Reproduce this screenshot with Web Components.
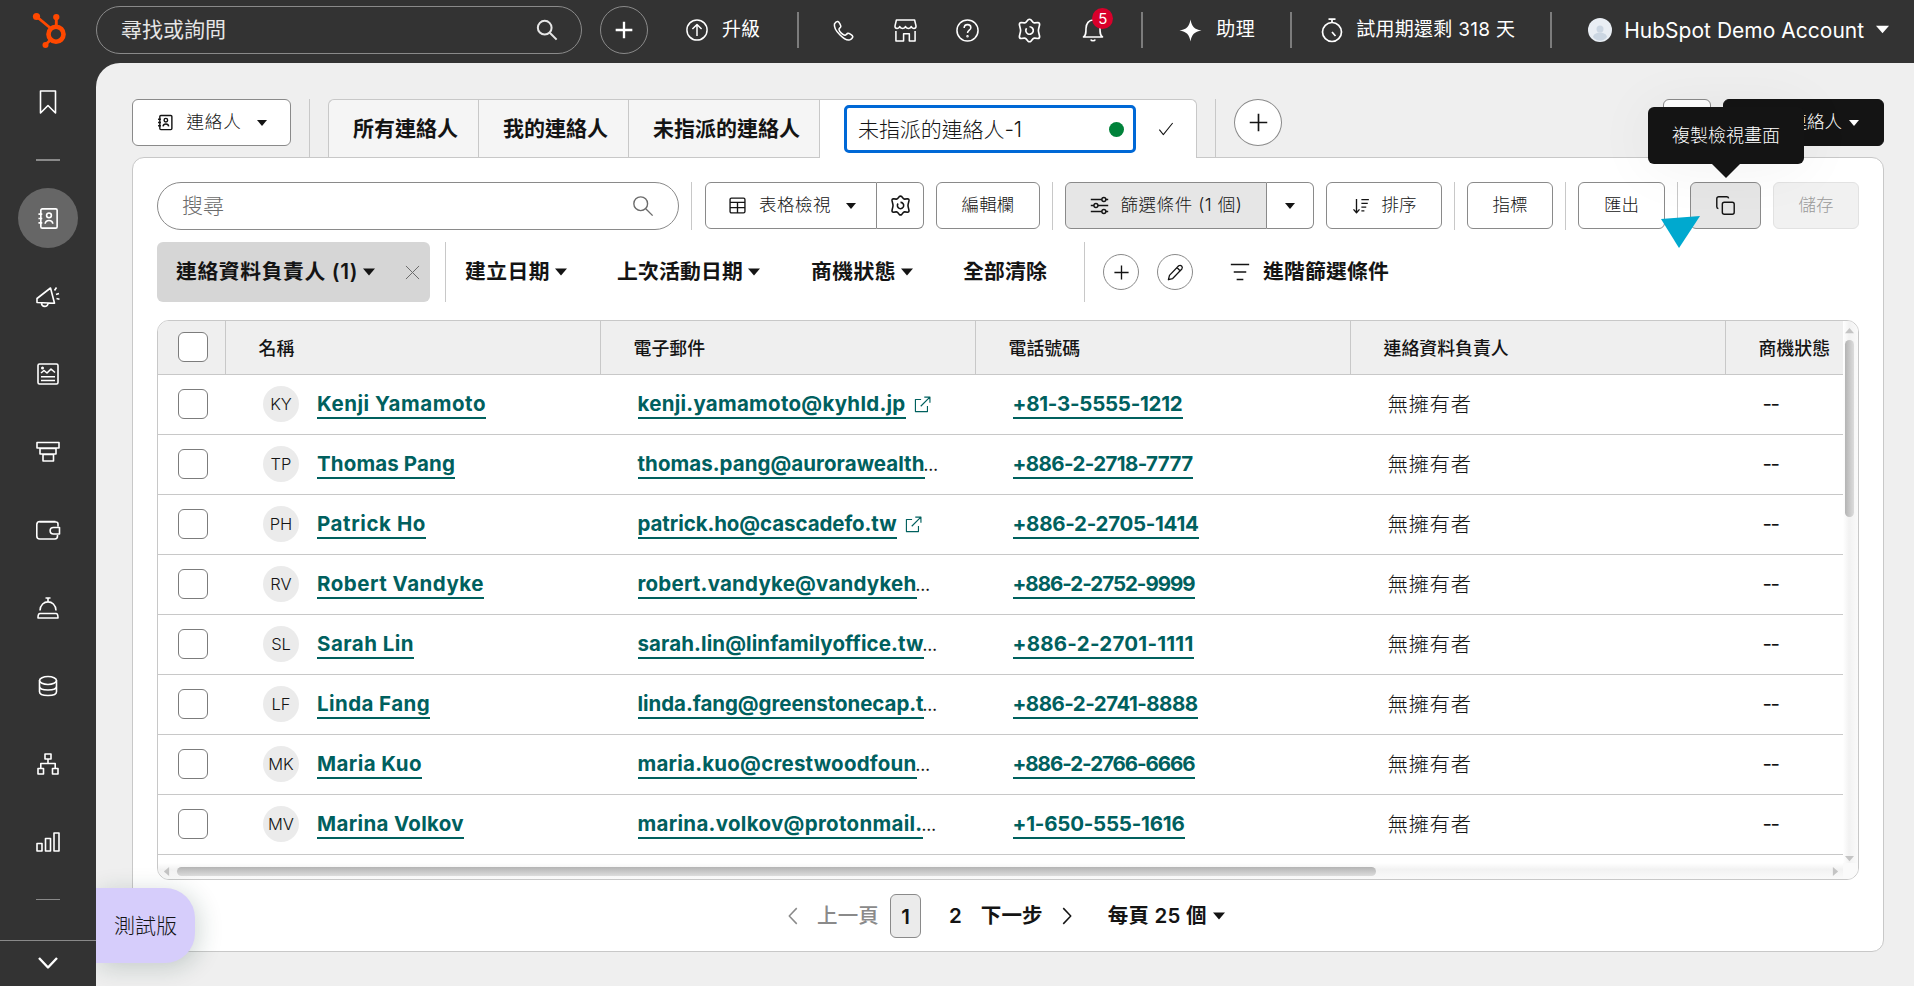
<!DOCTYPE html>
<html lang="zh-Hant">
<head>
<meta charset="utf-8">
<title>連絡人</title>
<style>
    html, body { margin: 0; padding: 0; }
    body {
        width: 1914px;
        height: 986px;
        overflow: hidden;
        font-family: Inter, "Noto Sans CJK TC", sans-serif;
        color: #141414;
    }
</style>
</head>
<body>
<crm-app></crm-app>

<script>
// All icons share a 24x24 box and are stroked with the current colour
const ICONS = {
    search: '<circle cx="9.5" cy="9.5" r="7.5"/><path d="M15 15l7.5 7.5"/>',
    plus: '<path d="M12 2v20M2 12h20"/>',
    upgrade: '<circle cx="12" cy="12" r="11"/><path d="M12 18.5V6M7 11l5-5 5 5"/>',
    phone: '<path d="M2.600 5.200C3.500 3.600 5 2.400 6 2.600c1.500.4 3.400 4.200 3.200 5.300-.2 1.300-2.200 1.800-1.900 3.200.5 2.300 3.800 5.400 6 5.900 1.500.3 2-1.800 3.300-2 1.200-.2 4.900 1.900 5.100 3.300.1 1.100-1.700 3-3.200 3.500C13.500 23.500 1.200 11.500 2.600 5.200z"/>',
    store: '<path d="M2.500 1h19l1.500 6.500c0 1.500-1 2.300-2.300 2.300-1.400 0-2.400-1-2.700-2-.3 1-1.500 2-3 2s-2.700-1-3-2c-.3 1-1.500 2-3 2s-2.700-1-3-2c-.3 1-1.300 2-2.700 2C2 9.800 1 9 1 7.500zM2 12.500V23h8v-7.500h6V23h6V12.500"/>',
    help: '<circle cx="12" cy="12" r="11"/><path d="M8.500 9.500c0-5 7-4.500 7-.5 0 2.700-3.500 2.700-3.500 5.700"/><circle cx="12" cy="18" r=".5"/>',
    gear: '<path d="M10.500 1.900q1.500-1.400 3 0l2 2.300q.6.600 1.500.5l3-.4q1.900.2 1.700 2.200l-1 4.200q-.3 1.300 0 2.600l1 4.200q.2 2-1.700 2.200l-3-.4q-.9-.1-1.500.5l-2 2.300q-1.500 1.400-3 0l-2-2.300q-.6-.6-1.500-.5l-3 .4q-1.900-.2-1.700-2.200l1-4.200q.3-1.300 0-2.600l-1-4.200q-.2-2 1.700-2.200l3 .4q.9.100 1.500-.5z"/><path d="M12 8.400a3.600 3.600 0 1 1-2.800 1.400"/>',
    bell: '<path d="M2.500 19h19c-2.500-1.700-2.500-4-2.500-8.500C19 5.500 16 2 12 2S5 5.500 5 10.500C5 15 5 17.300 2.500 19zM9.800 21.500c.5 1.700 3.900 1.700 4.400 0"/>',
    spark: '<path d="M12 .5c1.300 7.500 4 10.200 11.500 11.500C16 13.300 13.300 16 12 23.500 10.700 16 8 13.300.5 12 8 10.700 10.700 8 12 .5z" fill="currentColor" stroke="none"/>',
    timer: '<circle cx="12" cy="14" r="9.500"/><path d="M8.500 1.200h7M12 1.500v3M12 14l3.500 4"/>',
    bookmark: '<path d="M4.500 1h15v22L12 15.500 4.500 23z"/>',
    contacts: '<rect x="4" y="2" width="17" height="20" rx="1.500"/><circle cx="12.500" cy="8.700" r="2.500"/><path d="M8.500 17.500c.5-4.500 7.500-4.500 8 0M1.500 7.500h4M1.500 12h4M1.500 16.500h4"/>',
    megaphone: '<path d="M1 14.500v4l17.500.8L14.500 4zM5.500 19c0 4.500 6.500 4.500 6.500.3M18.500 6.500l2-3M20 10.500l3-1M20.500 14.500l3 .7"/>',
    report: '<rect x="2" y="2" width="20" height="20" rx="1.500"/><path d="M5 11l3-2.500 3 2.500 4-4 4 3.500M5 14.700h14M5 18.500h14"/><circle cx="6.500" cy="6" r=".7"/>',
    funnel: '<path d="M1 2.500h22v5.500H1zM4 8.500h16v5.500H4zM7 14.500h10.500V21H7z"/>',
    wallet: '<path d="M22 8.500V6c0-1-.7-2-2-2H3.500M19.500 3.500H4C2 3.500.8 4.500.8 6.500V18c0 2 1 3 3 3h15c2 0 2.700-1 2.700-3v-1M23.500 9.500h-6c-4.500 0-4.500 6.500 0 6.500h6z"/>',
    service: '<path d="M2 22c0-3 .5-4.500 2-4.500h16c1.500 0 2 1.500 2 4.500zM4 14.500C4.500 3 19.500 3 20 14.500M12 5.500V2M9.500 2h5"/>',
    data: '<ellipse cx="12" cy="6.500" rx="8.500" ry="4"/><path d="M3.500 6.500v11.200c0 5 17 5 17 0V6.500M3.500 12.300c0 5 17 5 17 0"/>',
    sitemap: '<path d="M9 2h6v5H9zM2 16.500h5.500V22H2zM16.500 16.500H22V22h-5.500zM12 7v4.500M4.800 16.500v-5h14.400v5"/>',
    bars: '<path d="M1 13.500h5V21H1zM9.500 8.500h5V21h-5zM18 3h5v18h-5z"/>',
    down: '<path d="M3 7l9 9.500L21 7"/>',
    left: '<path d="M17 1.500L7 12l10 10.500"/>',
    right: '<path d="M7 1.500L17 12 7 22.500"/>',
    check: '<path d="M2 13l6 7.500L22 3"/>',
    close: '<path d="M1.500 1.500l21 21M22.500 1.500l-21 21"/>',
    caret: '<path d="M0 5h24L12 19z" fill="currentColor" stroke="none"/>',
    grid: '<rect x="1.500" y="1.500" width="21" height="21" rx="2"/><path d="M1.500 7.500h21M1.500 15h21M12 7.500v15"/>',
    sliders: '<path d="M1 4.500h14M20 4.500h3M1 12h4M10 12h13M1 19.500h14M20 19.500h3"/><circle cx="17.500" cy="4.500" r="2.500"/><circle cx="7.500" cy="12" r="2.500"/><circle cx="17.500" cy="19.500" r="2.500"/>',
    sort: '<path d="M6 2.500v18M2 16.500l4 4.500 4-4.500M12.500 3.500h10M12.500 8.500h8.500M12.500 13.500h6.500M12.500 18.500h4"/>',
    copy: '<rect x="8" y="8" width="15" height="15" rx="2.500"/><path d="M3 16c-1.300-.3-2-1.200-2-2.500v-10C1 2 2 1 3.500 1h10c1.300 0 2.200.7 2.500 2"/>',
    pencil: '<path d="M3.500 16L16.500 2.500c3-2 6.500 1.500 4.500 4.500L8 20.500l-6 1.700zM14 5l4.800 4.800"/>',
    lines: '<path d="M1 3h22M4.500 12h15M8 21h8"/>',
    external: '<path d="M10 5H2v17h17v-8M14.500 1.500h8v8M22 2L9.500 14.500"/>',
    logo: '<g stroke="#ff4800" stroke-linecap="round"><circle cx="16" cy="14.800" r="5" stroke-width="3.100"/><path d="M3 3l9 7.500M16.200 3.500v6M12.400 18.500L9.300 21.500" stroke-width="1.900"/></g><g fill="#ff4800" stroke="none"><circle cx="3" cy="3" r="2.400"/><circle cx="16.200" cy="3.400" r="2.100"/><circle cx="9" cy="22" r="2"/></g>'
};

class UiIcon extends HTMLElement {
    constructor() {
        super();
        this.attachShadow({ mode: 'open' });
    }

    connectedCallback() {
        const size = this.getAttribute('size') || 24;
        const stroke = this.getAttribute('stroke') || 1.6;
        this.shadowRoot.innerHTML = `
            <style>
                :host { display: block; flex: none; width: ${size}px; height: ${size}px; }
                svg { display: block; overflow: visible; }
            </style>
            <svg width="${size}" height="${size}" viewBox="0 0 24 24" fill="none" stroke="currentColor"
                stroke-width="${stroke}" stroke-linejoin="round">${ICONS[this.getAttribute('name')]}</svg>
        `;
    }
}
customElements.define('ui-icon', UiIcon);

// Text that spreads its letters to fill the given width
class UiText extends HTMLElement {
    constructor() {
        super();
        this.attachShadow({ mode: 'open' });
        this.shadowRoot.innerHTML = `
            <style>
                :host { display: block; flex: none; white-space: nowrap; line-height: 1.3; }
                span { display: inline-block; }
            </style>
            <span><slot></slot></span>
        `;
    }

    connectedCallback() {
        const width = Number(this.getAttribute('w'));
        if (!width) return;
        const span = this.shadowRoot.querySelector('span');
        const count = [...this.textContent].length;
        const natural = span.getBoundingClientRect().width;
        this.style.width = width + 'px';
        span.style.letterSpacing = (width - natural) / count + 'px';
    }
}
customElements.define('ui-text', UiText);

class UiDivider extends HTMLElement {
    constructor() {
        super();
        this.attachShadow({ mode: 'open' });
        this.shadowRoot.innerHTML = `
            <style>
                :host { display: block; flex: none; width: 1px; height: 48px; background: #c8c8c8; }
            </style>
        `;
    }
}
customElements.define('ui-divider', UiDivider);

class UiButton extends HTMLElement {
    constructor() {
        super();
        this.attachShadow({ mode: 'open' });
        this.shadowRoot.innerHTML = `
            <style>
                :host {
                    display: flex;
                    flex: none;
                    align-items: center;
                    justify-content: center;
                    box-sizing: border-box;
                    height: 47px;
                    border: 1px solid #8a8a8a;
                    border-radius: 6px;
                    background: #fff;
                    font-size: 17.5px;
                    font-weight: 300;
                    white-space: nowrap;
                }
                :host([round]) { border-radius: 50%; }
                :host([join="start"]) { border-radius: 6px 0 0 6px; }
                :host([join="end"]) { border-radius: 0 6px 6px 0; border-left: 0; }
                :host([pressed]) { background: #e6e6e6; }
                :host([dark]) { background: #141414; border-color: #141414; color: #fff; }
                :host([disabled]) { background: #f1f1f1; border-color: #e2e2e2; color: #9a9a9a; }
            </style>
            <slot></slot>
        `;
    }
}
customElements.define('ui-button', UiButton);

class AppHeader extends HTMLElement {
    constructor() {
        super();
        this.attachShadow({ mode: 'open' });
        this.shadowRoot.innerHTML = `
            <style>
                :host {
                    display: flex;
                    align-items: center;
                    height: 63px;
                    padding-bottom: 3px;
                    box-sizing: border-box;
                    color: #fff;
                    font-size: 19px;
                    font-weight: 400;
                }
                .logo { width: 64px; padding-left: 32px; flex: none; }
                .search {
                    display: flex;
                    align-items: center;
                    justify-content: space-between;
                    flex: none;
                    box-sizing: border-box;
                    width: 486px;
                    height: 48px;
                    padding: 0 23px 0 24px;
                    border: 1px solid #8a8a8a;
                    border-radius: 24px;
                    color: #e6e6e6;
                    font-size: 21px;
                }
                .add {
                    display: grid;
                    place-items: center;
                    flex: none;
                    box-sizing: border-box;
                    width: 48px;
                    height: 48px;
                    margin: 0 38px 0 18px;
                    border: 1px solid #8a8a8a;
                    border-radius: 50%;
                }
                .line { width: 2px; height: 36px; background: #7c7c7c; flex: none; }
                .group { display: flex; flex: none; align-items: center; gap: 38.800px; padding: 0 36px 0 33px; }
                .item { display: flex; flex: none; align-items: center; gap: 14px; padding: 0 35px 0 36px; }
                .item.first { padding: 0 37px 0 0; }
                .item.trial { gap: 12px; padding-left: 28px; }
                .item.account { gap: 12px; font-size: 21px; padding-right: 0; }
                .account ui-text { padding-top: 2px; }
                .bell { position: relative; }
                .badge {
                    position: absolute;
                    left: 11px;
                    top: -10px;
                    width: 21px;
                    height: 21px;
                    border-radius: 50%;
                    background: #d9002b;
                    font-size: 15px;
                    line-height: 21px;
                    text-align: center;
                }
                .avatar { display: block; }
            </style>
            <div class="logo"><ui-icon name="logo" size="36"></ui-icon></div>
            <div class="search"><ui-text>尋找或詢問</ui-text><ui-icon name="search" size="22" stroke="2.200"></ui-icon></div>
            <div class="add"><ui-icon name="plus" size="20" stroke="2.800"></ui-icon></div>
            <div class="item first"><ui-icon name="upgrade" size="22"></ui-icon><ui-text w="38">升級</ui-text></div>
            <div class="line"></div>
            <div class="group">
                <ui-icon name="phone" size="23"></ui-icon>
                <ui-icon name="store" size="23"></ui-icon>
                <ui-icon name="help" size="23"></ui-icon>
                <ui-icon name="gear" size="25"></ui-icon>
                <div class="bell"><ui-icon name="bell" size="24"></ui-icon><div class="badge">5</div></div>
            </div>
            <div class="line"></div>
            <div class="item"><ui-icon name="spark" size="23"></ui-icon><ui-text w="39">助理</ui-text></div>
            <div class="line"></div>
            <div class="item trial"><ui-icon name="timer" size="24" stroke="1.700"></ui-icon><ui-text w="159">試用期還剩 318 天</ui-text></div>
            <div class="line"></div>
            <div class="item account">
                <svg class="avatar" width="24" height="24" viewBox="0 0 24 24">
                    <circle cx="12" cy="12" r="12" fill="#e9eef4"/>
                    <circle cx="12" cy="11" r="3.500" fill="#cbd6e2"/>
                    <path d="M5 19c1-6 13-6 14 0-4 5-10 5-14 0z" fill="#cbd6e2"/>
                </svg>
                <ui-text w="240">HubSpot Demo Account</ui-text>
                <ui-icon name="caret" size="13"></ui-icon>
            </div>
        `;
    }
}
customElements.define('app-header', AppHeader);

class SideNav extends HTMLElement {
    constructor() {
        super();
        this.attachShadow({ mode: 'open' });
        const items = ['megaphone', 'report', 'funnel', 'wallet', 'service', 'data', 'sitemap', 'bars'];
        this.shadowRoot.innerHTML = `
            <style>
                :host {
                    display: flex;
                    flex-direction: column;
                    align-items: center;
                    flex: none;
                    width: 96px;
                    color: #fff;
                }
                .slot { display: grid; place-items: center; height: 78px; }
                .rule { width: 24px; height: 2px; background: #8a8a8a; }
                .current {
                    display: grid;
                    place-items: center;
                    width: 60px;
                    height: 60px;
                    margin: 27px 0 9px;
                    border-radius: 50%;
                    background: #666;
                }
                .end { height: 1px; margin-top: 18px; }
                .more {
                    display: grid;
                    place-items: center;
                    width: 96px;
                    height: 45px;
                    margin-top: 40px;
                    padding-bottom: 1px;
                    box-sizing: border-box;
                    border-top: 1px solid #8a8a8a;
                }
            </style>
            <div class="slot"><ui-icon name="bookmark" size="24"></ui-icon></div>
            <div class="rule" style="margin-top: 18px"></div>
            <div class="current"><ui-icon name="contacts" size="23" stroke="1.700"></ui-icon></div>
            ${items.map(name => `<div class="slot"><ui-icon name="${name}" size="24"></ui-icon></div>`).join('')}
            <div class="rule end"></div>
            <div class="more"><ui-icon name="down" size="24" stroke="2.400"></ui-icon></div>
        `;
    }
}
customElements.define('side-nav', SideNav);

class ViewTabs extends HTMLElement {
    constructor() {
        super();
        this.attachShadow({ mode: 'open' });
        this.shadowRoot.innerHTML = `
            <style>
                :host { display: flex; align-items: flex-start; height: 58px; }
                ui-divider { height: 58px; }
                .object { width: 159px; margin-right: 18px; }
                .tabs { display: flex; margin: 0 18px; height: 59px; position: relative; }
                .tab {
                    display: flex;
                    align-items: center;
                    box-sizing: border-box;
                    height: 59px;
                    padding-left: 24px;
                    border: 1px solid #c8c8c8;
                    border-right: 0;
                    background: #f5f5f5;
                    font-size: 21px;
                    font-weight: 600;
                }
                .tab:first-child { border-top-left-radius: 6px; }
                .editing {
                    display: flex;
                    align-items: flex-start;
                    box-sizing: border-box;
                    width: 378px;
                    padding: 5px 0 0 24px;
                    border: 1px solid #c8c8c8;
                    border-bottom: 0;
                    border-top-right-radius: 6px;
                    background: #fff;
                }
                .name {
                    display: flex;
                    align-items: center;
                    justify-content: space-between;
                    box-sizing: border-box;
                    width: 292px;
                    height: 48px;
                    margin-right: 22px;
                    padding: 1px 9px 0 11px;
                    border: 3px solid #0068d6;
                    border-radius: 5px;
                    font-size: 21px;
                    font-weight: 300;
                }
                .dot { width: 15px; height: 15px; border-radius: 50%; background: #00823a; }
                .check { padding-top: 16px; }
                .new { width: 48px; height: 47px; margin-left: 18px; }
                .actions { display: flex; gap: 12px; margin-left: auto; }
            </style>
            <ui-button class="object">
                <ui-icon name="contacts" size="17" stroke="2"></ui-icon>
                <ui-text w="55" style="margin: 0 15px 0 13px">連絡人</ui-text>
                <ui-icon name="caret" size="10"></ui-icon>
            </ui-button>
            <ui-divider></ui-divider>
            <div class="tabs">
                <div class="tab" style="width: 150px"><ui-text>所有連絡人</ui-text></div>
                <div class="tab" style="width: 150px"><ui-text>我的連絡人</ui-text></div>
                <div class="tab" style="width: 191px"><ui-text>未指派的連絡人</ui-text></div>
                <div class="editing">
                    <div class="name"><ui-text w="164">未指派的連絡人-1</ui-text><span class="dot"></span></div>
                    <ui-icon class="check" name="check" size="16"></ui-icon>
                </div>
            </div>
            <ui-divider></ui-divider>
            <ui-button class="new" round><ui-icon name="plus" size="21" stroke="1.900"></ui-icon></ui-button>
            <div class="actions">
                <ui-button style="width: 48px"></ui-button>
                <ui-button dark style="width: 161px; justify-content: flex-end; padding-right: 24px">
                    <ui-text style="margin-right: 7px">新增連絡人</ui-text><ui-icon name="caret" size="10"></ui-icon>
                </ui-button>
            </div>
        `;
    }
}
customElements.define('view-tabs', ViewTabs);

class ToolBar extends HTMLElement {
    constructor() {
        super();
        this.attachShadow({ mode: 'open' });
        this.shadowRoot.innerHTML = `
            <style>
                :host { display: flex; align-items: flex-start; gap: 12px; height: 48px; }
                .search {
                    display: flex;
                    align-items: center;
                    justify-content: space-between;
                    box-sizing: border-box;
                    width: 522px;
                    height: 48px;
                    padding: 0 24px;
                    border: 1px solid #8a8a8a;
                    border-radius: 24px;
                    color: #6b6b6b;
                    font-size: 21px;
                    font-weight: 300;
                }
                .pair { display: flex; }
                .anchor { position: relative; }
                .tip {
                    position: absolute;
                    left: -42px;
                    top: -75px;
                    z-index: 2;
                    width: 156px;
                    height: 57px;
                    border-radius: 6px;
                    background: #141414;
                    color: #fff;
                    font-size: 18px;
                    font-weight: 300;
                    line-height: 57px;
                    text-align: center;
                    box-shadow: 0 2px 60px rgba(20, 20, 20, .06);
                }
                .tip::after {
                    content: "";
                    position: absolute;
                    left: 63px;
                    top: 56px;
                    border: 15px solid transparent;
                    border-top-color: #141414;
                    border-bottom: 0;
                }
            </style>
            <div class="search"><ui-text>搜尋</ui-text><ui-icon name="search" size="22" stroke="1.500"></ui-icon></div>
            <ui-divider></ui-divider>
            <div class="pair" style="margin-left: 1px">
                <ui-button join="start" style="width: 172px">
                    <ui-icon name="grid" size="17" stroke="1.900"></ui-icon>
                    <ui-text w="72" style="margin: 0 15px 0 13px">表格檢視</ui-text>
                    <ui-icon name="caret" size="10" style="margin-right: -3px"></ui-icon>
                </ui-button>
                <ui-button join="end" style="width: 47px"><ui-icon name="gear" size="21" stroke="1.800"></ui-icon></ui-button>
            </div>
            <ui-button style="width: 104px"><ui-text w="53">編輯欄</ui-text></ui-button>
            <ui-divider></ui-divider>
            <div class="pair">
                <ui-button join="start" pressed style="width: 202px">
                    <ui-icon name="sliders" size="19" stroke="1.800"></ui-icon>
                    <ui-text w="122" style="margin-left: 12px">篩選條件 (1 個)</ui-text>
                </ui-button>
                <ui-button join="end" style="width: 47px"><ui-icon name="caret" size="10"></ui-icon></ui-button>
            </div>
            <ui-button style="width: 116px">
                <ui-icon name="sort" size="18" stroke="1.800"></ui-icon><ui-text style="margin-left: 12px">排序</ui-text>
            </ui-button>
            <ui-divider></ui-divider>
            <ui-button style="width: 86px"><ui-text>指標</ui-text></ui-button>
            <ui-divider></ui-divider>
            <ui-button style="width: 87px"><ui-text>匯出</ui-text></ui-button>
            <ui-divider></ui-divider>
            <div class="anchor">
                <ui-button pressed style="width: 71px"><ui-icon name="copy" size="19" stroke="1.800"></ui-icon></ui-button>
                <div class="tip">複製檢視畫面</div>
            </div>
            <ui-button disabled style="width: 86px"><ui-text>儲存</ui-text></ui-button>
        `;
    }
}
customElements.define('tool-bar', ToolBar);

class FilterBar extends HTMLElement {
    constructor() {
        super();
        this.attachShadow({ mode: 'open' });
        this.shadowRoot.innerHTML = `
            <style>
                :host {
                    display: flex;
                    align-items: center;
                    height: 60px;
                    font-size: 20.800px;
                    font-weight: 600;
                }
                ui-divider { height: 60px; }
                .chip {
                    display: flex;
                    align-items: center;
                    justify-content: space-between;
                    box-sizing: border-box;
                    width: 273px;
                    height: 60px;
                    margin-right: 15px;
                    padding: 0 10px 0 19px;
                    border-radius: 6px;
                    background: #d6d6d6;
                }
                .close { color: #6b6b6b; }
                .drop { display: flex; align-items: center; gap: 5px; }
                ui-button { width: 36px; height: 36px; }
            </style>
            <div class="chip">
                <div class="drop"><ui-text w="182">連絡資料負責人 (1)</ui-text><ui-icon name="caret" size="12"></ui-icon></div>
                <ui-icon class="close" name="close" size="15"></ui-icon>
            </div>
            <ui-divider></ui-divider>
            <div class="drop" style="margin-left: 19px"><ui-text w="85">建立日期</ui-text><ui-icon name="caret" size="12"></ui-icon></div>
            <div class="drop" style="margin-left: 50px"><ui-text w="126">上次活動日期</ui-text><ui-icon name="caret" size="12"></ui-icon></div>
            <div class="drop" style="margin-left: 51px"><ui-text w="85">商機狀態</ui-text><ui-icon name="caret" size="12"></ui-icon></div>
            <ui-text w="84" style="margin: 0 37px 0 50px">全部清除</ui-text>
            <ui-divider></ui-divider>
            <ui-button round style="margin-left: 18px"><ui-icon name="plus" size="17" stroke="1.900"></ui-icon></ui-button>
            <ui-button round style="margin: 0 37px 0 18px"><ui-icon name="pencil" size="17" stroke="1.800"></ui-icon></ui-button>
            <ui-icon name="lines" size="20" stroke="1.700"></ui-icon>
            <ui-text w="126" style="margin-left: 13px">進階篩選條件</ui-text>
        `;
    }
}
customElements.define('filter-bar', FilterBar);

// name, name width, email, email width, cut off, phone, phone width
const CONTACTS = [
    ['Kenji Yamamoto', 169, 'kenji.yamamoto@kyhld.jp', 268, false, '+81-3-5555-1212', 170],
    ['Thomas Pang', 138, 'thomas.pang@aurorawealth', 287, true, '+886-2-2718-7777', 180],
    ['Patrick Ho', 109, 'patrick.ho@cascadefo.tw', 259, false, '+886-2-2705-1414', 186],
    ['Robert Vandyke', 167, 'robert.vandyke@vandykeh', 279, true, '+886-2-2752-9999', 182],
    ['Sarah Lin', 97, 'sarah.lin@linfamilyoffice.tw', 286, true, '+886-2-2701-1111', 181],
    ['Linda Fang', 113, 'linda.fang@greenstonecap.t', 286, true, '+886-2-2741-8888', 185],
    ['Maria Kuo', 105, 'maria.kuo@crestwoodfoun', 279, true, '+886-2-2766-6666', 182],
    ['Marina Volkov', 147, 'marina.volkov@protonmail.', 285, true, '+1-650-555-1616', 172]
];

class ContactRow extends HTMLElement {
    constructor() {
        super();
        this.attachShadow({ mode: 'open' });
    }

    connectedCallback() {
        const [name, nameW, email, emailW, cut, phone, phoneW] = CONTACTS[this.getAttribute('index')];
        const initials = name.split(' ').map(part => part[0]).join('');
        this.shadowRoot.innerHTML = `
            <style>
                :host {
                    display: grid;
                    grid-template-columns: 67px 375px 375px 375px 375px 118px;
                    align-items: center;
                    box-sizing: border-box;
                    height: 60px;
                    border-bottom: 1px solid #c8c8c8;
                    font-size: 20.500px;
                    font-weight: 300;
                }
                div { display: flex; align-items: center; }
                .box {
                    box-sizing: border-box;
                    width: 30px;
                    height: 30px;
                    margin: 0 0 2px 20px;
                    border: 1px solid #7c7c7c;
                    border-radius: 6px;
                    background: #fff;
                }
                .avatar {
                    justify-content: center;
                    width: 36px;
                    height: 36px;
                    margin: 0 18px 2px 38px;
                    border-radius: 50%;
                    background: #ebebeb;
                    font-size: 16.500px;
                }
                .link {
                    color: #00605e;
                    font-weight: 650;
                    line-height: 26px;
                    border-bottom: 2px solid #00605e;
                }
                .cell { padding-left: 37.500px; }
                .dots { margin-left: -1px; font-size: 16px; font-weight: 500; padding-top: 2px; }
                .dash { font-weight: 400; }
                .owner { padding-top: 2px; }
                .external { margin-left: 8px; color: #00605e; }
            </style>
            <div><span class="box"></span></div>
            <div><div class="avatar">${initials}</div><ui-text class="link" w="${nameW}">${name}</ui-text></div>
            <div class="cell">
                <ui-text class="link" w="${emailW}">${email}</ui-text>
                ${cut ? '<ui-text class="dots">…</ui-text>' : '<ui-icon class="external" name="external" size="17"></ui-icon>'}
            </div>
            <div class="cell"><ui-text class="link" w="${phoneW}">${phone}</ui-text></div>
            <div class="cell"><ui-text class="owner" w="84">無擁有者</ui-text></div>
            <div class="cell"><ui-text class="dash" w="16">--</ui-text></div>
        `;
    }
}
customElements.define('contact-row', ContactRow);

class ContactTable extends HTMLElement {
    constructor() {
        super();
        this.attachShadow({ mode: 'open' });
        const columns = ['名稱', '電子郵件', '電話號碼', '連絡資料負責人', '商機狀態'];
        this.shadowRoot.innerHTML = `
            <style>
                :host {
                    display: grid;
                    grid-template-columns: 1fr 15px;
                    grid-template-rows: 1fr 16px;
                    box-sizing: border-box;
                    height: 560px;
                    border: 1px solid #c8c8c8;
                    border-radius: 12px;
                    overflow: hidden;
                }
                .rows { overflow: hidden; }
                .head {
                    display: grid;
                    grid-template-columns: 67px 375px 375px 375px 375px 118px;
                    height: 53px;
                    border-bottom: 1px solid #c8c8c8;
                    background: #efefef;
                    font-size: 17.900px;
                    font-weight: 500;
                }
                .head > div {
                    display: flex;
                    align-items: center;
                    padding: 2px 0 0 32.500px;
                    border-left: 1px solid #c8c8c8;
                }
                .head > .all { padding: 0 0 2px 20px; border: 0; }
                .box {
                    box-sizing: border-box;
                    width: 30px;
                    height: 30px;
                    border: 1px solid #7c7c7c;
                    border-radius: 6px;
                    background: #fff;
                }
                .vertical, .horizontal { display: flex; align-items: center; color: #c4c4c4; }
                .vertical {
                    flex-direction: column;
                    justify-content: space-between;
                    padding: 5px 2px 0 0;
                    background: linear-gradient(90deg, #fff, #f2f2f2 40%, #fafafa);
                }
                .vertical .thumb {
                    width: 9px;
                    height: 177px;
                    margin: 5px 0 auto;
                    border-radius: 5px;
                    background: linear-gradient(90deg, #b4b4b4, #dcdcdc);
                }
                .horizontal { padding: 0 3px 0 4px; background: linear-gradient(#fff, #f2f2f2 40%, #fafafa); }
                .horizontal .thumb {
                    width: 1199px;
                    height: 9px;
                    margin: 0 auto 0 6px;
                    border-radius: 5px;
                    background: linear-gradient(#b4b4b4, #dcdcdc);
                }
                .corner { background: #fafafa; }
            </style>
            <div class="rows">
                <div class="head">
                    <div class="all"><span class="box"></span></div>
                    ${columns.map(label => `<div><ui-text>${label}</ui-text></div>`).join('')}
                </div>
                ${CONTACTS.map((contact, i) => `<contact-row index="${i}"></contact-row>`).join('')}
            </div>
            <div class="vertical">
                <ui-icon name="caret" size="9" style="transform: rotate(180deg)"></ui-icon>
                <div class="thumb"></div>
                <ui-icon name="caret" size="9"></ui-icon>
            </div>
            <div class="horizontal">
                <ui-icon name="caret" size="9" style="transform: rotate(90deg)"></ui-icon>
                <div class="thumb"></div>
                <ui-icon name="caret" size="9" style="transform: rotate(-90deg)"></ui-icon>
            </div>
            <div class="corner"></div>
        `;
    }
}
customElements.define('contact-table', ContactTable);

class PagerBar extends HTMLElement {
    constructor() {
        super();
        this.attachShadow({ mode: 'open' });
        this.shadowRoot.innerHTML = `
            <style>
                :host {
                    display: flex;
                    align-items: center;
                    height: 44px;
                    padding-left: 627px;
                    font-size: 20.500px;
                    font-weight: 600;
                }
                .muted { color: #8a8a8a; font-weight: 500; }
                .page {
                    display: grid;
                    place-items: center;
                    box-sizing: border-box;
                    width: 31px;
                    height: 44px;
                    margin: 0 28px 0 11px;
                    border: 1px solid #8a8a8a;
                    border-radius: 6px;
                    background: #ebebeb;
                }
            </style>
            <ui-icon class="muted" name="left" size="18" stroke="2"></ui-icon>
            <ui-text class="muted" w="62" style="margin-left: 15px">上一頁</ui-text>
            <div class="page">1</div>
            <ui-text>2</ui-text>
            <ui-text w="62" style="margin: 0 15px 0 19px">下一步</ui-text>
            <ui-icon name="right" size="18" stroke="2"></ui-icon>
            <ui-text w="99" style="margin: 0 6px 0 32px">每頁 25 個</ui-text>
            <ui-icon name="caret" size="12"></ui-icon>
        `;
    }
}
customElements.define('pager-bar', PagerBar);

class CrmApp extends HTMLElement {
    constructor() {
        super();
        this.attachShadow({ mode: 'open' });
        this.shadowRoot.innerHTML = `
            <style>
                :host {
                    display: flex;
                    flex-direction: column;
                    position: relative;
                    width: 1914px;
                    height: 986px;
                    background: #333;
                    overflow: hidden;
                }
                .body { display: flex; flex: 1; min-height: 0; }
                main {
                    flex: 1;
                    min-width: 0;
                    padding: 36px 30px 0 36px;
                    border-top-left-radius: 24px;
                    background: #efefef;
                }
                .card {
                    box-sizing: border-box;
                    height: 795px;
                    padding: 24px;
                    border: 1px solid #c8c8c8;
                    border-radius: 12px;
                    background: #fff;
                }
                filter-bar { margin: 12px 0 18px; }
                pager-bar { margin-top: 14px; }
                .beta {
                    position: absolute;
                    left: 96px;
                    top: 888px;
                    display: flex;
                    align-items: center;
                    box-sizing: border-box;
                    width: 99px;
                    height: 75px;
                    padding-left: 18px;
                    border-radius: 0 30px 30px 0;
                    background: #d6cdfb;
                    font-size: 21px;
                    font-weight: 300;
                    box-shadow: 4px 4px 24px rgba(20, 60, 50, .2);
                    clip-path: inset(-40px -40px -40px 0);
                }
                .cursor { position: absolute; left: 1660px; top: 215px; z-index: 3; }
            </style>
            <app-header></app-header>
            <div class="body">
                <side-nav></side-nav>
                <main>
                    <view-tabs></view-tabs>
                    <div class="card">
                        <tool-bar></tool-bar>
                        <filter-bar></filter-bar>
                        <contact-table></contact-table>
                        <pager-bar></pager-bar>
                    </div>
                </main>
            </div>
            <div class="beta"><ui-text w="63">測試版</ui-text></div>
            <svg class="cursor" width="40" height="34" viewBox="0 0 40 34"><path d="M1 4L40 1 19 33z" fill="#00a9cf"/></svg>
        `;
    }
}
customElements.define('crm-app', CrmApp);
</script>
</body>
</html>
